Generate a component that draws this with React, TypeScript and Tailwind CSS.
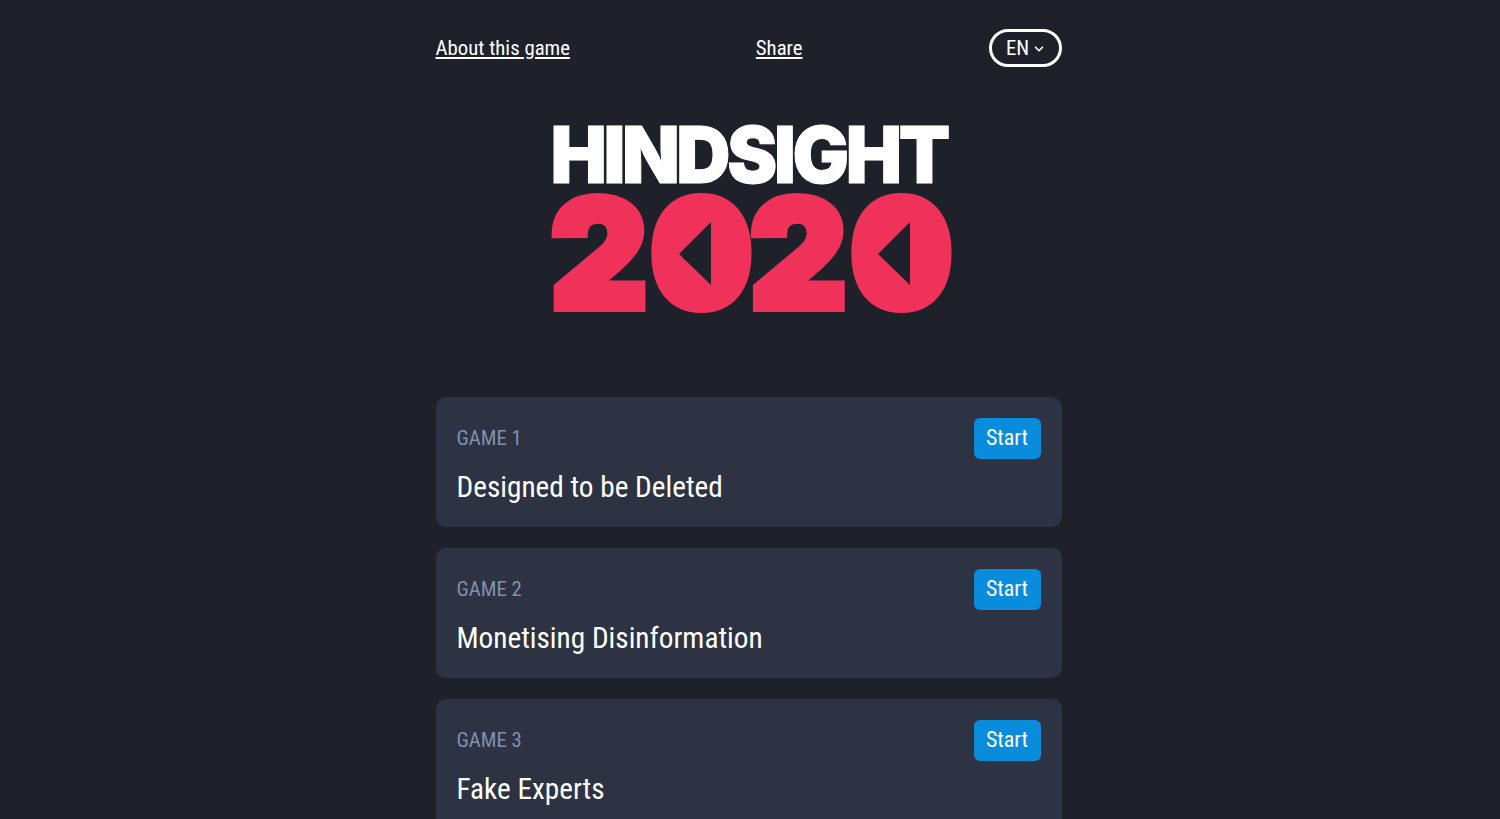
import { ChevronDown } from "lucide-react";

const games = [
    { label: "GAME 1", title: "Designed to be Deleted" },
    { label: "GAME 2", title: "Monetising Disinformation" },
    { label: "GAME 3", title: "Fake Experts" },
];

const Digit = ({ c }: { c: string }) => (
    <div className="relative flex h-[119px] w-[99px] items-center justify-center">
        {c === "0" ? (
            <span className="ml-[6px] block scale-x-[0.96] text-[150px] leading-[119px] [-webkit-text-stroke:8px_#f0325a]">{c}</span>
        ) : (
            <span className="block scale-x-[1.0] text-[150px] leading-[119px] [-webkit-text-stroke:8px_#f0325a]">{c}</span>
        )}
        {c === "0" && (
            <svg viewBox="0 0 99 119" className="absolute inset-0 h-[119px] w-[99px]">
                <rect x="25" y="18" width="56" height="84" rx="10" fill="#f0325a" />
                <polygon points="62,28 30,60 62,91" fill="#1e212a" />
            </svg>
        )}
    </div>
);

const Logo = () => (
    <div className="mt-[57px] flex h-[189px] w-[398px] flex-col items-center self-center font-['Inter',sans-serif] font-black [font-stretch:100%]">
        <div className="flex h-[60px] w-[394px] items-center justify-center whitespace-nowrap text-[79px] leading-[60px] tracking-[-3.5px] text-white">
            <span className="block scale-x-[0.95] [-webkit-text-stroke:1px_white]">HINDSIGHT</span>
        </div>
        <div className="mt-[10px] flex h-[119px] w-[398px] justify-between text-[#f0325a]">
            {["2", "0", "2", "0"].map((c, i) => (
                <Digit key={i} c={c} />
            ))}
        </div>
    </div>
);

export default function App() {
    return (
        <div className="h-screen overflow-hidden bg-[#1e212a] pr-[3px] font-['Roboto',sans-serif] [font-stretch:75%]">
            <div className="mx-auto flex w-[626px] flex-col">
                <nav className="flex h-[67px] items-end justify-between">
                    <div className="flex h-[38px] w-[367px] items-center justify-between pt-[2px]">
                        <a className="text-[20.8px] text-white underline">About this game</a>
                        <a className="text-[20.8px] text-white underline">Share</a>
                    </div>
                    <button className="flex h-[38px] w-[73px] items-center justify-center gap-[3px] rounded-full border-[3px] border-white pl-[2px] pt-[1px] text-[20.8px] text-white">
                        EN
                        <ChevronDown size={14} strokeWidth={3} />
                    </button>
                </nav>
                <Logo />
                <div className="mt-[84px] flex flex-col gap-[21px]">
                    {games.map((game) => (
                        <section key={game.label} className="h-[130px] rounded-[10px] bg-[#2d3342] p-[21px]">
                            <div className="flex items-center justify-between">
                                <span className="text-[20.8px] text-[#8090ad]">{game.label}</span>
                                <button className="h-[41px] w-[67px] rounded-[6px] bg-[#0a8cdd] pb-[2px] text-[22px] text-white">Start</button>
                            </div>
                            <h2 className="mt-[8px] text-[29.25px] leading-[40px] text-white">{game.title}</h2>
                        </section>
                    ))}
                </div>
            </div>
        </div>
    );
}
